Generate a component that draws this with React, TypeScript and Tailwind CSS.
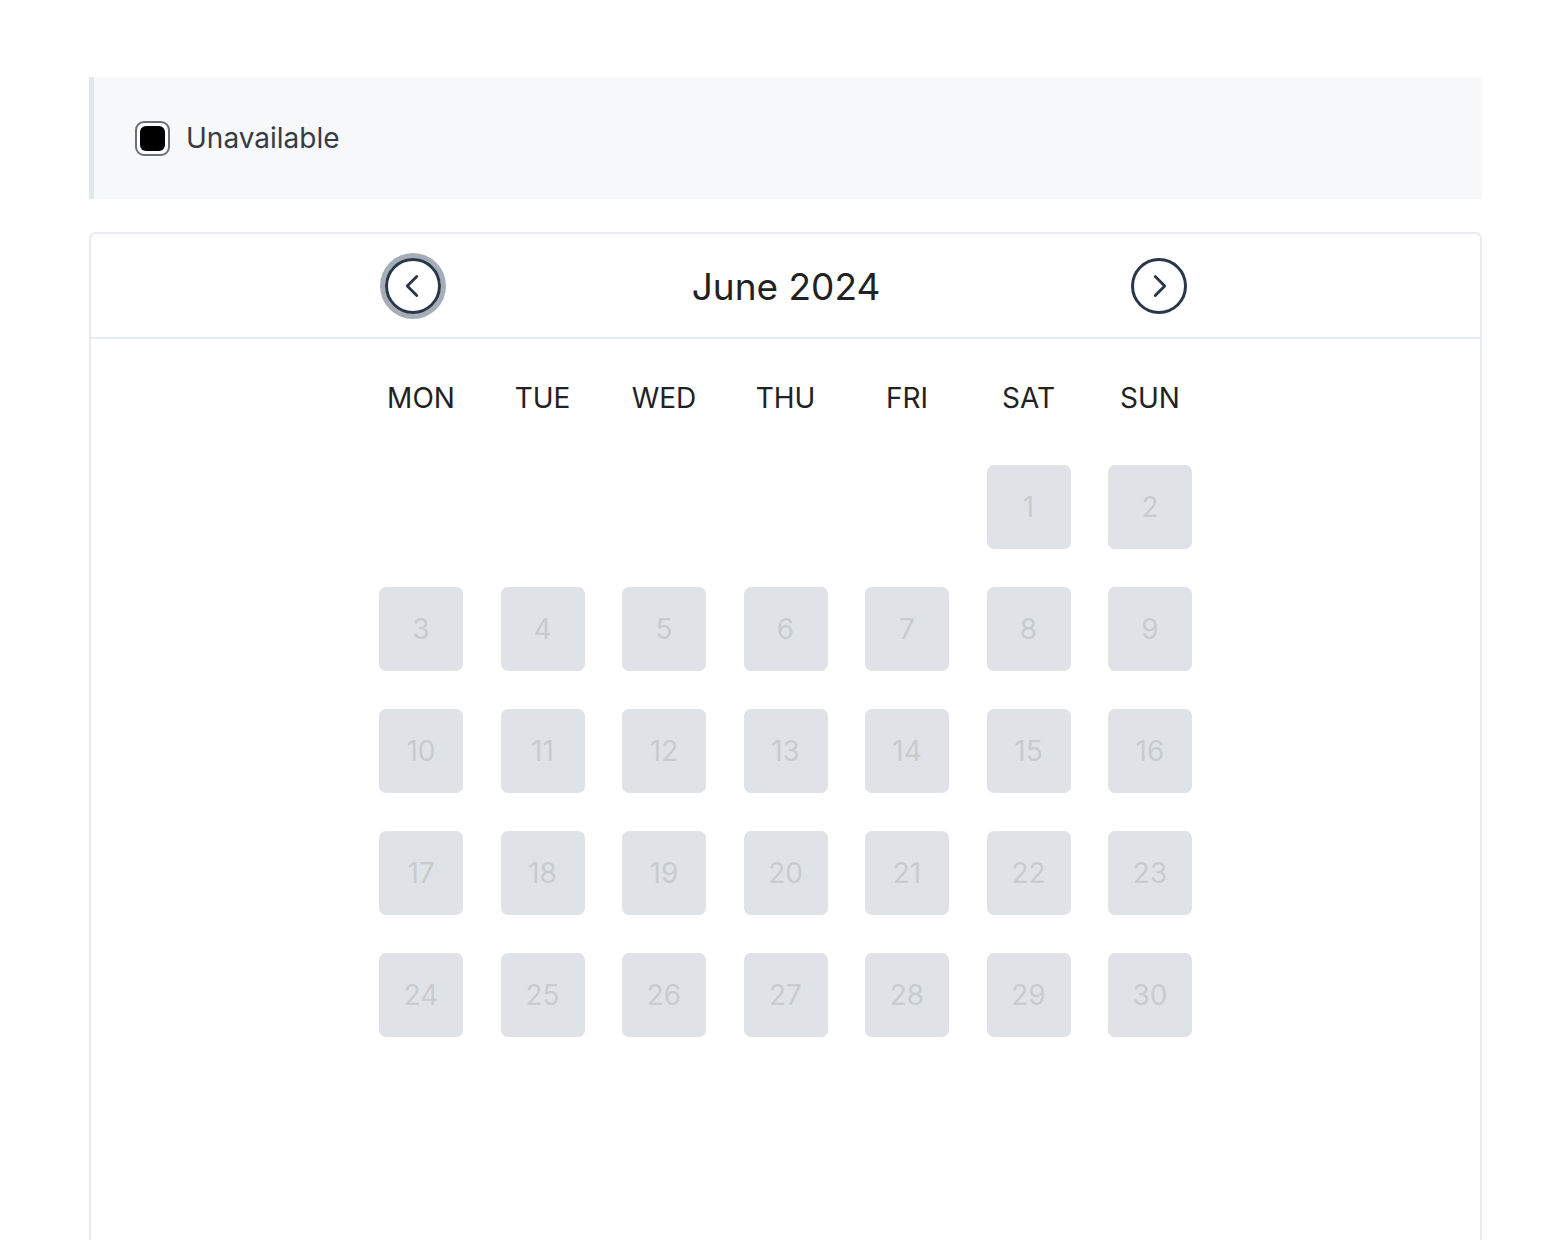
import { ChevronLeft, ChevronRight } from "lucide-react";

const DAY_NAMES = ["MON", "TUE", "WED", "THU", "FRI", "SAT", "SUN"];

// June 2024 starts on a Saturday (Monday-first grid => 5 blanks)
const cells: (number | null)[] = [
  ...Array.from({ length: 5 }, () => null),
  ...Array.from({ length: 30 }, (_, i) => i + 1),
];

function DayCell({ day }: { day: number | null }) {
  if (day === null) {
    return <div className="h-[84px] w-[84px]" />;
  }
  return (
    <button
      disabled
      className="flex h-[84px] w-[84px] items-center justify-center rounded-[7px] bg-[#dfe3e8] text-[28px] text-[#c9cbce]"
    >
      {day}
    </button>
  );
}

export default function App() {
  return (
    <div
      className="h-[1240px] overflow-hidden bg-white pl-[89px] pr-[82px] pt-[77px]"
      style={{ fontFamily: "Inter, 'Noto Sans', sans-serif" }}
    >
      <div className="flex h-[122px] items-center border-l-[5px] border-[#e3e7ec] bg-[#f7f8fa] pl-[41px]">
        <label className="flex items-center gap-[16px]">
          <span className="flex h-[35px] w-[35px] items-center justify-center rounded-[9px] border-2 border-[#6b7075] bg-white">
            <span className="h-[25px] w-[25px] rounded-[6px] bg-black" />
          </span>
          <span className="text-[28px] text-[#363c45]">Unavailable</span>
        </label>
      </div>

      <div className="mt-[33px] h-[1100px] rounded-[7px] border-2 border-[#e8ebef]">
        <div className="flex h-[105px] items-center justify-center border-b-2 border-[#e8ebef]">
          <div className="flex w-[813px] items-center justify-between pl-[6px] pr-[5px]">
            <button className="flex h-[56px] w-[56px] items-center justify-center rounded-full border-[3px] border-[#2a3748] text-[#2a3748] ring-[5px] ring-[#a5adb7]">
              <ChevronLeft size={38} strokeWidth={1.8} className="-ml-[2px]" />
            </button>
            <h2 className="mt-[3px] text-[37px] text-[#222]">June 2024</h2>
            <button className="flex h-[56px] w-[56px] items-center justify-center rounded-full border-[3px] border-[#2a3748] text-[#2a3748]">
              <ChevronRight size={38} strokeWidth={1.8} className="-mr-[2px]" />
            </button>
          </div>
        </div>

        <div className="mx-auto mt-[40px] w-[813px]">
          <div className="grid grid-cols-[repeat(7,84px)] justify-between">
            {DAY_NAMES.map((d) => (
              <div key={d} className="text-center text-[28px] leading-[38px] text-[#222]">
                {d}
              </div>
            ))}
          </div>
          <div className="mt-[48px] grid grid-cols-[repeat(7,84px)] justify-between gap-y-[38px]">
            {cells.map((day, i) => (
              <DayCell key={i} day={day} />
            ))}
          </div>
        </div>
      </div>
    </div>
  );
}
